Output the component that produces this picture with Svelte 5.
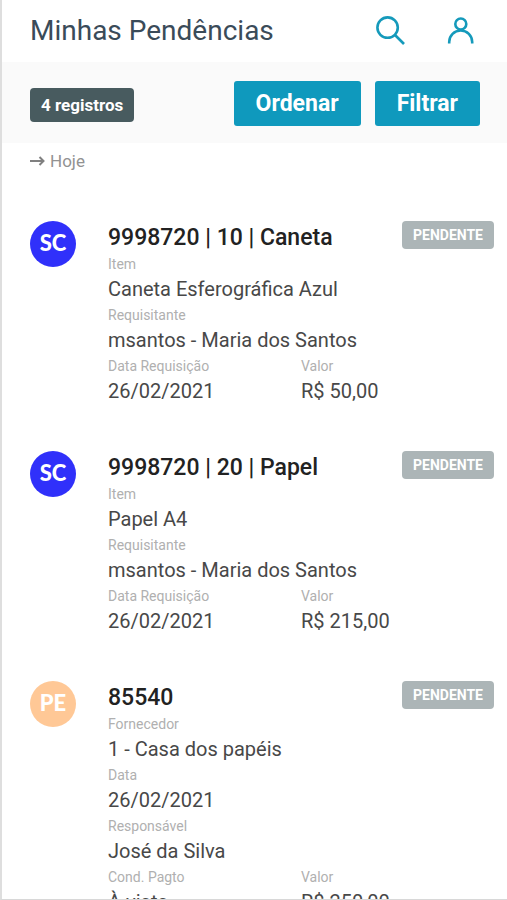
<script lang="ts">
  type Field = { label: string; value: string; half?: boolean };
  type Task = { kind: string; title: string; status: string; fields: Field[] };

  const tasks: Task[] = [
    {
      kind: 'SC',
      title: '9998720 | 10 | Caneta',
      status: 'PENDENTE',
      fields: [
        { label: 'Item', value: 'Caneta Esferográfica Azul' },
        { label: 'Requisitante', value: 'msantos - Maria dos Santos' },
        { label: 'Data Requisição', value: '26/02/2021', half: true },
        { label: 'Valor', value: 'R$ 50,00', half: true },
      ],
    },
    {
      kind: 'SC',
      title: '9998720 | 20 | Papel',
      status: 'PENDENTE',
      fields: [
        { label: 'Item', value: 'Papel A4' },
        { label: 'Requisitante', value: 'msantos - Maria dos Santos' },
        { label: 'Data Requisição', value: '26/02/2021', half: true },
        { label: 'Valor', value: 'R$ 215,00', half: true },
      ],
    },
    {
      kind: 'PE',
      title: '85540',
      status: 'PENDENTE',
      fields: [
        { label: 'Fornecedor', value: '1 - Casa dos papéis' },
        { label: 'Data', value: '26/02/2021' },
        { label: 'Responsável', value: 'José da Silva' },
        { label: 'Cond. Pagto', value: 'À vista', half: true },
        { label: 'Valor', value: 'R$ 250,00', half: true },
      ],
    },
  ];
</script>

<div class="app">
  <header>
    <h1>Minhas Pendências</h1>
    <button class="icon" aria-label="Pesquisar">
      <svg width="32" height="32" viewBox="0 0 32 32">
        <circle cx="12.6" cy="12.6" r="10.2" />
        <path d="M20 20 L29 29" />
      </svg>
    </button>
    <button class="icon" aria-label="Perfil">
      <svg width="32" height="32" viewBox="0 0 32 32">
        <circle cx="15.8" cy="9" r="5.5" />
        <path d="M4.2 28.5 V27 A11.5 11.5 0 0 1 27.2 27 V28.5" />
      </svg>
    </button>
  </header>

  <div class="toolbar">
    <span class="count">4 registros</span>
    <button class="action">Ordenar</button>
    <button class="action">Filtrar</button>
  </div>

  <main>
    <h2>
      <svg width="15" height="12" viewBox="0 0 15 12">
        <path d="M0 6 H13 M9.5 2 L13.5 6 L9.5 10" />
      </svg>
      Hoje
    </h2>
    {#each tasks as task}
      <article>
        <div class="avatar" class:order={task.kind === 'PE'}>{task.kind}</div>
        <div class="body">
          <div class="heading">
            <h3>{task.title}</h3>
            <span class="status">{task.status}</span>
          </div>
          <dl>
            {#each task.fields as field}
              <div class="field" class:half={field.half}>
                <dt>{field.label}</dt>
                <dd>{field.value}</dd>
              </div>
            {/each}
          </dl>
        </div>
      </article>
    {/each}
  </main>
</div>

<style>
  :global(body) {
    margin: 0;
    background: #fff;
  }
  .app {
    box-sizing: border-box;
    height: 100vh;
    display: flex;
    flex-direction: column;
    border-left: 2px solid #dedede;
    border-bottom: 1px solid #d8d8d8;
    font-family: Roboto, 'Liberation Sans', sans-serif;
    color: #484848;
  }
  header {
    flex: none;
    display: flex;
    align-items: center;
    gap: 38px;
    height: 62px;
    padding: 0 30px 0 28px;
  }
  h1 {
    flex: 1;
    margin: 0;
    font-size: 28px;
    font-weight: 400;
    line-height: 32px;
    color: #3a4b59;
  }
  .icon {
    width: 32px;
    height: 32px;
    padding: 0;
    border: 0;
    background: none;
    cursor: pointer;
  }
  .icon svg {
    display: block;
    fill: none;
    stroke: #159abb;
    stroke-width: 2.6;
  }
  .toolbar {
    flex: none;
    display: flex;
    align-items: baseline;
    gap: 14px;
    padding: 19px 27px 17px 28px;
    background: #fafafa;
  }
  .count {
    margin-right: auto;
    padding: 0 11px;
    border-radius: 4px;
    font-size: 17px;
    font-weight: 700;
    line-height: 34px;
    color: #fff;
    background: #485b5f;
  }
  .action {
    height: 45px;
    padding: 0 22px;
    border: 0;
    border-radius: 3px;
    font: 700 23px Roboto, 'Liberation Sans', sans-serif;
    color: #fff;
    background: #0f99bd;
    cursor: pointer;
  }
  main {
    flex: 1;
    min-height: 0;
    overflow-y: auto;
    scrollbar-width: none;
  }
  h2 {
    display: flex;
    align-items: center;
    gap: 5px;
    margin: 0;
    padding: 6px 28px 48px;
    font-size: 17px;
    font-weight: 400;
    line-height: 24px;
    color: #929292;
  }
  h2 svg {
    fill: none;
    stroke: #808080;
    stroke-width: 2;
  }
  article {
    display: flex;
    gap: 32px;
    padding: 0 13px 43px 28px;
  }
  .avatar {
    flex: none;
    width: 46px;
    height: 46px;
    border-radius: 50%;
    font-family: Lato, sans-serif;
    font-size: 22px;
    font-weight: 900;
    line-height: 44px;
    text-align: center;
    color: #fff;
    background: #3030fa;
  }
  .avatar.order {
    background: #ffc896;
  }
  .body {
    flex: 1;
    min-width: 0;
  }
  .heading {
    display: flex;
    justify-content: space-between;
    align-items: flex-start;
  }
  h3 {
    margin: 0;
    font-size: 23px;
    font-weight: 500;
    line-height: 34px;
    color: #222;
  }
  .status {
    padding: 0 11px;
    border-radius: 4px;
    font-size: 14px;
    font-weight: 700;
    line-height: 28px;
    color: #fff;
    background: #acb5b7;
  }
  dl {
    display: flex;
    flex-wrap: wrap;
    margin: 0;
  }
  .field {
    width: 100%;
  }
  .field.half {
    width: 50%;
  }
  dt {
    font-size: 14px;
    line-height: 18px;
    color: #b0b0b0;
  }
  dd {
    margin: 0;
    font-size: 20px;
    line-height: 33px;
  }
</style>
